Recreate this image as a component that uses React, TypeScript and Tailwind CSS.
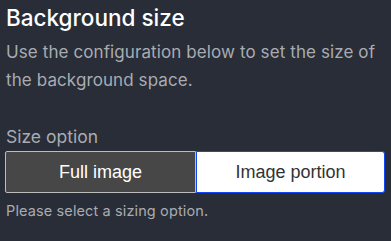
export default function App() {
  return (
    <div className="min-h-[241px] w-full bg-[#282d37] px-[5px] pt-[3px] font-['Inter',sans-serif]">
      {/* Heading */}
      <h2 className="pl-px text-[22.5px] font-medium leading-[30px] text-white">Background size</h2>
      <p className="mt-[5px] pl-px text-[17px] leading-[28px] tracking-[0.1px] text-[#a8acb2]">
        Use the configuration below to set the size of the background space.
      </p>

      {/* Size option toggle */}
      <div className="mt-[32px]">
        <div className="pl-px text-[17.5px] leading-[22px] text-[#a8acb2]">Size option</div>
        <div className="mt-[3px] flex h-[42px] w-[380px]">
          <button className="w-[191px] rounded-l-[2px] border border-[#bdbdbd] bg-[#474747] font-['Liberation_Sans',sans-serif] text-[18px] text-white">
            Full image
          </button>
          <button className="flex-1 rounded-r-[3px] border-[1.5px] border-[#0f48f2] bg-white font-['Liberation_Sans',sans-serif] text-[18px] text-[#333]">
            Image portion
          </button>
        </div>
        <p className="mt-[9px] pl-px text-[14.5px] leading-[18px] tracking-[0.12px] text-[#a8acb2]">
          Please select a sizing option.
        </p>
      </div>
    </div>
  );
}
